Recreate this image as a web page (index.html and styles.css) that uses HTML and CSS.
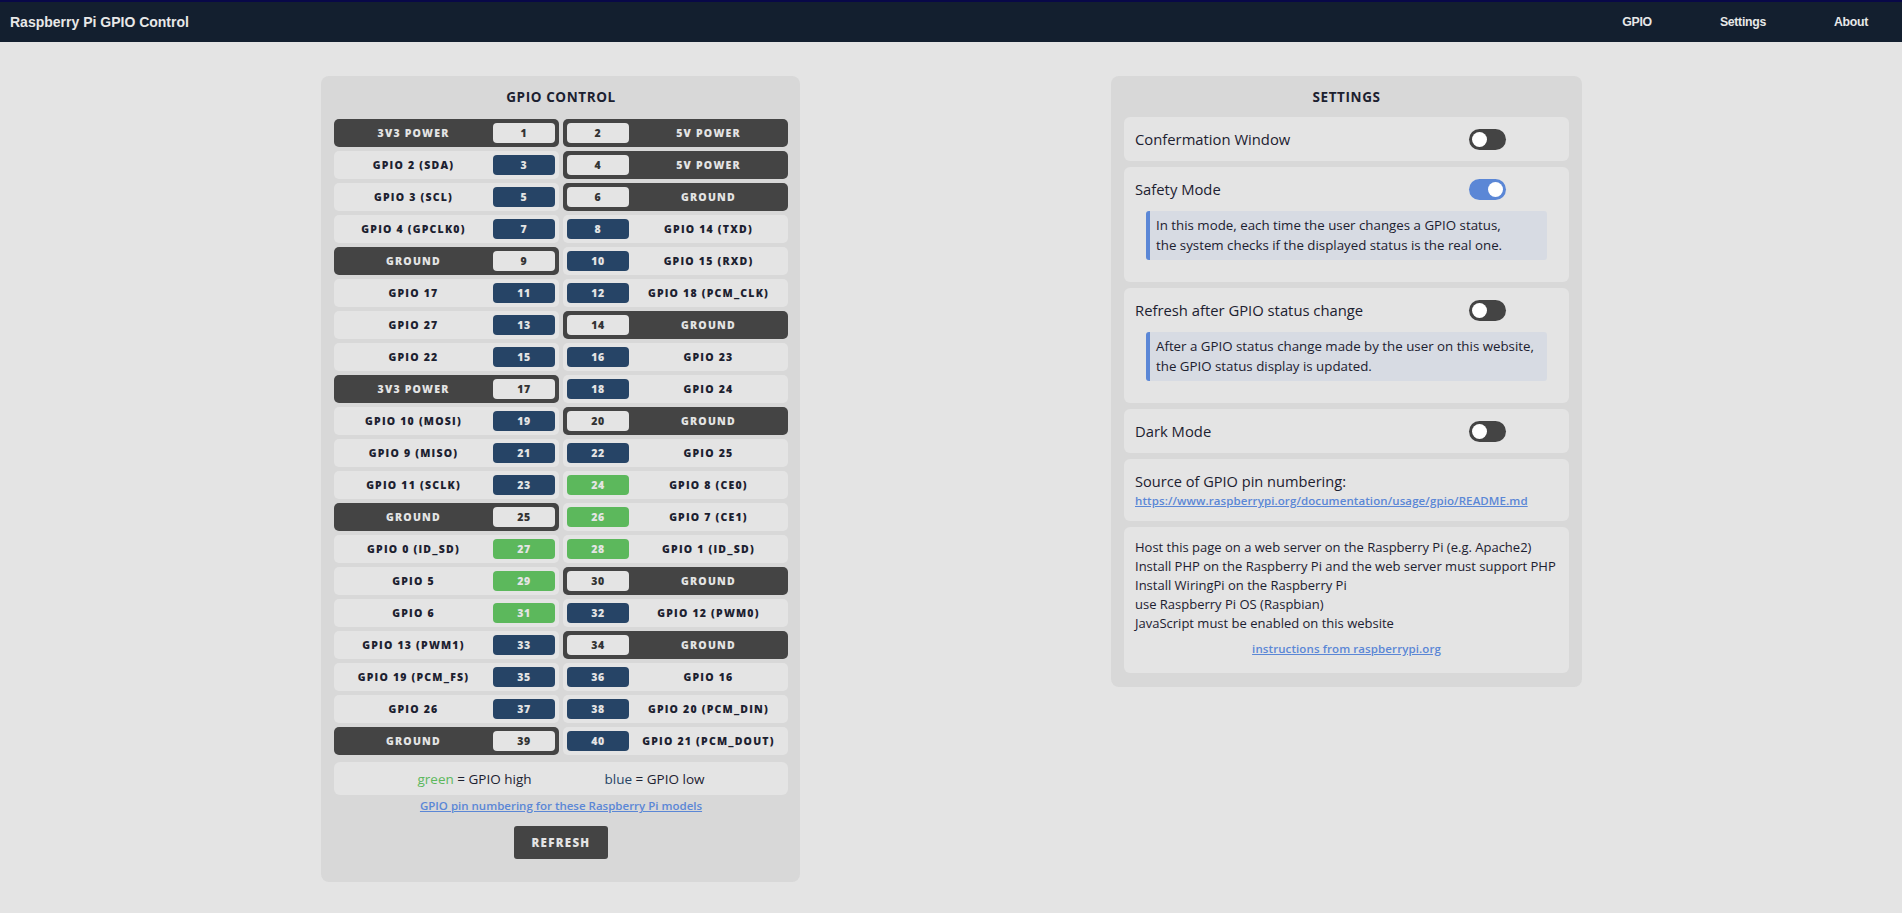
FILE: index.html
```html
<!DOCTYPE html>
<html lang="en">
<head>
<meta charset="utf-8">
<title>Raspberry Pi GPIO Control</title>
<link rel="stylesheet" href="styles.css">
</head>
<body>
<nav class="topbar">
  <div class="brand">Raspberry Pi GPIO Control</div>
  <div class="navlinks">
    <a class="navlink">GPIO</a>
    <a class="navlink">Settings</a>
    <a class="navlink">About</a>
  </div>
</nav>
<main class="main">
  <section class="panel gpio-panel">
    <h2 class="panel-title">GPIO CONTROL</h2>
    <div class="pins">
      <div class="cell left dark"><span class="label">3V3 POWER</span><span class="num">1</span></div>
      <div class="cell right dark"><span class="num">2</span><span class="label">5V POWER</span></div>

      <div class="cell left"><span class="label">GPIO 2 (SDA)</span><span class="num low">3</span></div>
      <div class="cell right dark"><span class="num">4</span><span class="label">5V POWER</span></div>

      <div class="cell left"><span class="label">GPIO 3 (SCL)</span><span class="num low">5</span></div>
      <div class="cell right dark"><span class="num">6</span><span class="label">GROUND</span></div>

      <div class="cell left"><span class="label">GPIO 4 (GPCLK0)</span><span class="num low">7</span></div>
      <div class="cell right"><span class="num low">8</span><span class="label">GPIO 14 (TXD)</span></div>

      <div class="cell left dark"><span class="label">GROUND</span><span class="num">9</span></div>
      <div class="cell right"><span class="num low">10</span><span class="label">GPIO 15 (RXD)</span></div>

      <div class="cell left"><span class="label">GPIO 17</span><span class="num low">11</span></div>
      <div class="cell right"><span class="num low">12</span><span class="label">GPIO 18 (PCM_CLK)</span></div>

      <div class="cell left"><span class="label">GPIO 27</span><span class="num low">13</span></div>
      <div class="cell right dark"><span class="num">14</span><span class="label">GROUND</span></div>

      <div class="cell left"><span class="label">GPIO 22</span><span class="num low">15</span></div>
      <div class="cell right"><span class="num low">16</span><span class="label">GPIO 23</span></div>

      <div class="cell left dark"><span class="label">3V3 POWER</span><span class="num">17</span></div>
      <div class="cell right"><span class="num low">18</span><span class="label">GPIO 24</span></div>

      <div class="cell left"><span class="label">GPIO 10 (MOSI)</span><span class="num low">19</span></div>
      <div class="cell right dark"><span class="num">20</span><span class="label">GROUND</span></div>

      <div class="cell left"><span class="label">GPIO 9 (MISO)</span><span class="num low">21</span></div>
      <div class="cell right"><span class="num low">22</span><span class="label">GPIO 25</span></div>

      <div class="cell left"><span class="label">GPIO 11 (SCLK)</span><span class="num low">23</span></div>
      <div class="cell right"><span class="num high">24</span><span class="label">GPIO 8 (CE0)</span></div>

      <div class="cell left dark"><span class="label">GROUND</span><span class="num">25</span></div>
      <div class="cell right"><span class="num high">26</span><span class="label">GPIO 7 (CE1)</span></div>

      <div class="cell left"><span class="label">GPIO 0 (ID_SD)</span><span class="num high">27</span></div>
      <div class="cell right"><span class="num high">28</span><span class="label">GPIO 1 (ID_SD)</span></div>

      <div class="cell left"><span class="label">GPIO 5</span><span class="num high">29</span></div>
      <div class="cell right dark"><span class="num">30</span><span class="label">GROUND</span></div>

      <div class="cell left"><span class="label">GPIO 6</span><span class="num high">31</span></div>
      <div class="cell right"><span class="num low">32</span><span class="label">GPIO 12 (PWM0)</span></div>

      <div class="cell left"><span class="label">GPIO 13 (PWM1)</span><span class="num low">33</span></div>
      <div class="cell right dark"><span class="num">34</span><span class="label">GROUND</span></div>

      <div class="cell left"><span class="label">GPIO 19 (PCM_FS)</span><span class="num low">35</span></div>
      <div class="cell right"><span class="num low">36</span><span class="label">GPIO 16</span></div>

      <div class="cell left"><span class="label">GPIO 26</span><span class="num low">37</span></div>
      <div class="cell right"><span class="num low">38</span><span class="label">GPIO 20 (PCM_DIN)</span></div>

      <div class="cell left dark"><span class="label">GROUND</span><span class="num">39</span></div>
      <div class="cell right"><span class="num low">40</span><span class="label">GPIO 21 (PCM_DOUT)</span></div>
    </div>
    <div class="legend">
      <span><span class="green">green</span> = GPIO high</span>
      <span><span class="blue">blue</span> = GPIO low</span>
    </div>
    <a class="small-link">GPIO pin numbering for these Raspberry Pi models</a>
    <div class="btn-row"><button class="refresh">REFRESH</button></div>
  </section>

  <section class="panel settings-panel">
    <h2 class="panel-title">SETTINGS</h2>
    <div class="item">
      <div class="item-head"><span class="item-label">Confermation Window</span><span class="toggle"></span></div>
    </div>
    <div class="item">
      <div class="item-head"><span class="item-label">Safety Mode</span><span class="toggle on"></span></div>
      <div class="note">In this mode, each time the user changes a GPIO status,<br>the system checks if the displayed status is the real one.</div>
    </div>
    <div class="item">
      <div class="item-head"><span class="item-label">Refresh after GPIO status change</span><span class="toggle"></span></div>
      <div class="note">After a GPIO status change made by the user on this website,<br>the GPIO status display is updated.</div>
    </div>
    <div class="item">
      <div class="item-head"><span class="item-label">Dark Mode</span><span class="toggle"></span></div>
    </div>
    <div class="item source">
      <div class="source-title">Source of GPIO pin numbering:</div>
      <a class="src-link">https://www.raspberrypi.org/documentation/usage/gpio/README.md</a>
    </div>
    <div class="item reqs">
      <div class="req-line">Host this page on a web server on the Raspberry Pi (e.g. Apache2)</div>
      <div class="req-line">Install PHP on the Raspberry Pi and the web server must support PHP</div>
      <div class="req-line">Install WiringPi on the Raspberry Pi</div>
      <div class="req-line">use Raspberry Pi OS (Raspbian)</div>
      <div class="req-line">JavaScript must be enabled on this website</div>
      <div class="req-link-row"><a class="req-link">instructions from raspberrypi.org</a></div>
    </div>
  </section>
</main>
</body>
</html>
```

FILE: styles.css
```css
* { box-sizing: border-box; }
html, body { margin: 0; padding: 0; }
body {
  background: #e4e4e4;
  font-family: "Open Sans", "Noto Sans", sans-serif;
  color: #1c2130;
  width: 1902px;
  height: 913px;
  overflow: hidden;
}

.topbar {
  height: 42px;
  border-top: 2px solid #080848;
  background: #131f2f;
  display: flex;
  align-items: center;
  justify-content: space-between;
  color: #e8e8e8;
}
.brand {
  font-family: "Liberation Sans", Arial, sans-serif;
  font-weight: 700;
  font-size: 14px;
  padding-left: 10px;
}
.navlinks { display: flex; }
.navlink {
  font-family: "Liberation Sans", Arial, sans-serif;
  font-weight: 700;
  font-size: 12.3px;
  padding: 0 34px;
  letter-spacing: -0.3px;
}

.main {
  display: flex;
  align-items: flex-start;
  padding: 34px 0 0 321px;
  gap: 311px;
}

.panel {
  background: #d8d8d8;
  border-radius: 8px;
}
.panel-title {
  margin: 0;
  text-align: center;
  font-size: 13.5px;
  font-weight: 700;
  line-height: 22px;
  letter-spacing: 0.6px;
  color: #1c2130;
}

.gpio-panel {
  width: 479px;
  padding: 10px 12px 23px 13px;
}
.gpio-panel .panel-title { margin-bottom: 11px; }

.pins {
  display: grid;
  grid-template-columns: 1fr 1fr;
  gap: 4px;
}
.cell {
  height: 28px;
  border-radius: 5px;
  background: #e4e4e4;
  display: flex;
  align-items: center;
}
.cell.dark { background: #444444; }
.label {
  flex: 1;
  text-align: center;
  font-size: 10.5px;
  font-weight: 800;
  letter-spacing: 1.2px;
  color: #1c2130;
  white-space: nowrap;
}
.cell.dark .label { color: #e4e4e4; }
.num {
  width: 62px;
  height: 20px;
  border-radius: 4px;
  background: #e4e4e4;
  color: #333;
  font-size: 10.5px;
  font-weight: 800;
  letter-spacing: 0.6px;
  display: flex;
  align-items: center;
  justify-content: center;
}
.cell.left .num { margin-right: 4px; }
.cell.right .num { margin-left: 4px; }
.num.low { background: #264466; color: #e4e4e4; }
.num.high { background: #5cb85c; color: #e4e4e4; }

.legend {
  margin-top: 7px;
  height: 33px;
  background: #e4e4e4;
  border-radius: 6px;
  display: flex;
  align-items: center;
  justify-content: center;
  gap: 73px;
  font-size: 13.5px;
  color: #1c2130;
}
.green { color: #5cb85c; }
.blue { color: #264466; }

.small-link {
  display: block;
  text-align: center;
  margin-top: 4px;
  line-height: 14px;
  font-size: 11.5px;
  font-weight: 600;
  color: #5b87d6;
  text-decoration: underline;
}
.btn-row {
  display: flex;
  justify-content: center;
  margin-top: 13px;
}
.refresh {
  width: 94px;
  height: 33px;
  border: none;
  border-radius: 3px;
  background: #444444;
  color: #e4e4e4;
  font-family: "Open Sans", sans-serif;
  font-weight: 800;
  font-size: 11.5px;
  letter-spacing: 1.3px;
  padding: 0;
}

.settings-panel {
  width: 471px;
  padding: 10px 13px 14px 13px;
}
.settings-panel .panel-title { margin-bottom: 9px; }

.item {
  display: flow-root;
  background: #e4e4e4;
  border-radius: 6px;
  padding: 0 11px;
  margin-bottom: 6px;
}
.item:last-child { margin-bottom: 0; }
.item-head {
  height: 44px;
  display: flex;
  align-items: center;
}
.item-label {
  flex: 1;
  font-size: 14.8px;
  color: #1c2130;
}
.toggle {
  position: relative;
  width: 37px;
  height: 21px;
  border-radius: 11px;
  background: #444444;
  margin-right: 52px;
  flex: none;
}
.toggle::after {
  content: "";
  position: absolute;
  top: 3px;
  left: 3px;
  width: 15px;
  height: 15px;
  border-radius: 50%;
  background: #ffffff;
}
.toggle.on { background: #5b87d6; }
.toggle.on::after { left: 19px; }

.note {
  margin: 0 11px 22px 11px;
  background: #d7dbe3;
  border-left: 4px solid #5b87d6;
  border-radius: 3px;
  padding: 5px 6px;
  font-size: 13.3px;
  line-height: 19.5px;
  color: #1c2130;
}

.source { padding-top: 12px; padding-bottom: 10px; }
.source-title { font-size: 14.6px; line-height: 20px; }
.src-link {
  display: block;
  font-size: 11.5px;
  line-height: 20px;
  font-weight: 600;
  color: #5b87d6;
  text-decoration: underline;
  letter-spacing: 0.1px;
}

.reqs { padding-top: 11px; padding-bottom: 15px; }
.req-line { font-size: 13px; line-height: 19px; white-space: nowrap; }
.req-link-row { text-align: center; margin-top: 5px; line-height: 19px; }
.req-link {
  font-size: 11.5px;
  font-weight: 600;
  color: #5b87d6;
  text-decoration: underline;
  letter-spacing: 0.1px;
}
```
